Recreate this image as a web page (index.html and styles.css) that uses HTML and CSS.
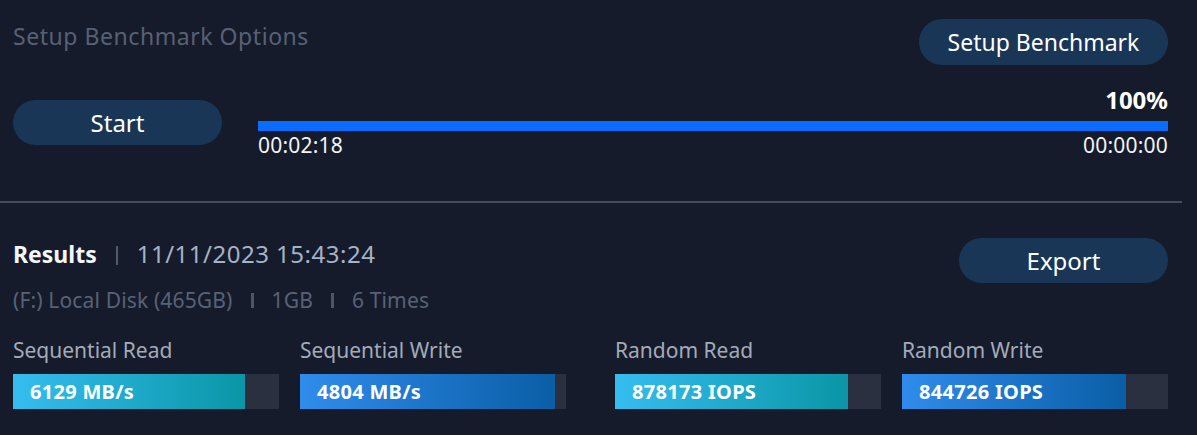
FILE: index.html
```html
<!DOCTYPE html>
<html lang="en">
<head>
<meta charset="utf-8">
<title>Benchmark</title>
<link rel="stylesheet" href="styles.css">
</head>
<body>
<div class="app">
  <div class="head">
    <div class="title">Setup Benchmark Options</div>
    <button class="pill pill-setup">Setup Benchmark</button>
  </div>
  <div class="run">
    <button class="pill pill-start">Start</button>
    <div class="progress">
      <div class="pct">100%</div>
      <div class="track"><div class="track-fill" style="width:100%"></div></div>
      <div class="times"><span>00:02:18</span><span>00:00:00</span></div>
    </div>
  </div>
  <div class="divider"></div>
  <div class="res-head">
    <div class="res-title">
      <span class="res-label">Results</span>
      <span class="sep sep-thin"></span>
      <span class="res-date">11/11/2023 15:43:24</span>
    </div>
    <button class="pill pill-export">Export</button>
  </div>
  <div class="info">
    <span>(F:) Local Disk (465GB)</span>
    <span class="sep sep-thick"></span>
    <span>1GB</span>
    <span class="sep sep-thick"></span>
    <span>6 Times</span>
  </div>
  <div class="metrics">
    <div class="group">
      <div class="metric">
        <div class="m-label">Sequential Read</div>
        <div class="bar"><div class="bar-fill cyan" style="width:87.2%">6129 MB/s</div></div>
      </div>
      <div class="metric">
        <div class="m-label">Sequential Write</div>
        <div class="bar"><div class="bar-fill blue" style="width:95.9%">4804 MB/s</div></div>
      </div>
    </div>
    <div class="group">
      <div class="metric">
        <div class="m-label">Random Read</div>
        <div class="bar"><div class="bar-fill cyan" style="width:87.6%">878173 IOPS</div></div>
      </div>
      <div class="metric">
        <div class="m-label">Random Write</div>
        <div class="bar"><div class="bar-fill blue" style="width:84.2%">844726 IOPS</div></div>
      </div>
    </div>
  </div>
</div>
</body>
</html>
```

FILE: styles.css
```css
* { box-sizing: border-box; }
html, body {
  margin: 0;
  padding: 0;
  background: #151b2b;
  height: 100%;
}
body {
  font-family: "Noto Sans", "Open Sans", sans-serif;
  color: #ffffff;
  overflow: hidden;
}
.app {
  padding: 19px 29px 0 13px;
}
.head {
  display: flex;
  justify-content: space-between;
  align-items: flex-start;
}
.title {
  margin-top: 2px;
  font-size: 23px;
  line-height: 30px;
  color: #586174;
  letter-spacing: 0.55px;
}
.pill {
  border: none;
  background: #1a3656;
  color: #ffffff;
  font-family: inherit;
  border-radius: 24px;
  padding: 0;
  font-size: 23px;
  line-height: 30px;
  display: flex;
  align-items: center;
  justify-content: center;
}
.pill-setup { width: 249px; height: 46px; }
.pill-start { width: 209px; height: 45px; margin-top: 14px; font-size: 24px; }
.pill-export { width: 209px; height: 45px; font-size: 24px; }
.run {
  display: flex;
  align-items: flex-start;
  margin-top: 21px;
}
.progress {
  flex: 1;
  margin-left: 36px;
  display: flex;
  flex-direction: column;
}
.pct {
  text-align: right;
  font-weight: 700;
  font-size: 24px;
  line-height: 28px;
}
.track {
  margin-top: 7px;
  height: 10px;
  background: #0d2a55;
}
.track-fill {
  height: 100%;
  background: #0a6cff;
}
.times {
  margin-top: 1px;
  display: flex;
  justify-content: space-between;
  font-size: 21px;
  line-height: 26px;
  color: #f2f4f7;
  letter-spacing: 0.2px;
}
.divider {
  margin: 43px -14px 0 -13px;
  height: 2px;
  background: #464c5b;
}
.res-head {
  margin-top: 35px;
  display: flex;
  justify-content: space-between;
  align-items: flex-start;
}
.res-title {
  margin-top: 1px;
  display: flex;
  align-items: center;
  height: 30px;
}
.res-label {
  font-weight: 700;
  font-size: 23px;
  line-height: 30px;
  color: #f4f5f8;
}
.res-date {
  font-size: 24px;
  line-height: 30px;
  color: #a6b2c6;
  letter-spacing: 0.5px;
}
.sep {
  display: inline-block;
  background: #4b5263;
}
.sep-thin {
  width: 2px;
  height: 19px;
  margin: 2px 19px 0 19px;
  background: #535a6b;
}
.sep-thick {
  width: 3px;
  height: 15px;
  margin: 1px 18px 0 18px;
  background: #4e5566;
}
.info {
  margin-top: 4px;
  display: flex;
  align-items: center;
  font-size: 21px;
  line-height: 26px;
  color: #596275;
  letter-spacing: 0.15px;
}
.metrics {
  margin-top: 24px;
  display: flex;
  gap: 49px;
}
.group {
  display: flex;
  gap: 21px;
}
.metric {
  width: 266px;
}
.m-label {
  font-size: 21px;
  line-height: 26px;
  color: #a3abba;
}
.bar {
  margin-top: 11px;
  height: 35px;
  background: #2a3040;
}
.bar-fill {
  height: 100%;
  padding-left: 17px;
  font-weight: 700;
  font-size: 20px;
  line-height: 35px;
  color: #ffffff;
  white-space: nowrap;
  letter-spacing: 0.3px;
}
.cyan { background: linear-gradient(90deg, #35bdf0 0%, #0a96a6 100%); }
.blue { background: linear-gradient(90deg, #308cec 0%, #0a5ea6 100%); }
```
